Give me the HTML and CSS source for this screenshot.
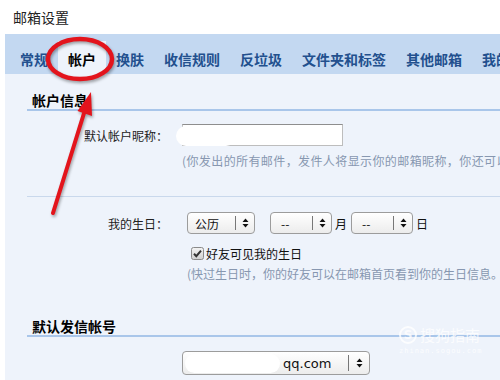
FILE: index.html
```html
<!DOCTYPE html>
<html lang="zh-CN">
<head>
<meta charset="utf-8">
<title>邮箱设置</title>
<link rel="stylesheet" href="styles.css">
</head>
<body>
<div class="page">
  <div class="title">邮箱设置</div>
  <div class="tabs">
    <span class="tab">常规</span>
    <span class="tab active">帐户</span>
    <span class="tab">换肤</span>
    <span class="tab">收信规则</span>
    <span class="tab">反垃圾</span>
    <span class="tab">文件夹和标签</span>
    <span class="tab">其他邮箱</span>
    <span class="tab">我的</span>
  </div>
  <div class="content">
    <div class="heading">帐户信息</div>
    <div class="row row-nick">
      <span class="label">默认帐户昵称：</span>
      <span class="input"><span class="blob blob-in"></span></span>
    </div>
    <div class="hint hint1">(你发出的所有邮件，发件人将显示你的邮箱昵称，你还可以</div>
    <div class="divider"></div>
    <div class="row row-birth">
      <span class="label">我的生日：</span>
      <span class="sel sel-cal"><span class="val">公历</span><span class="sep"></span><svg class="arr" width="7" height="10" viewBox="0 0 7 10"><path d="M3.5 0.5L6.5 4H0.5Z M3.5 9.5L6.5 6H0.5Z" fill="#111"/></svg></span>
      <span class="sel sel-num"><span class="val">--</span><span class="sep"></span><svg class="arr" width="7" height="10" viewBox="0 0 7 10"><path d="M3.5 0.5L6.5 4H0.5Z M3.5 9.5L6.5 6H0.5Z" fill="#111"/></svg></span>
      <span class="unit">月</span>
      <span class="sel sel-num"><span class="val">--</span><span class="sep"></span><svg class="arr" width="7" height="10" viewBox="0 0 7 10"><path d="M3.5 0.5L6.5 4H0.5Z M3.5 9.5L6.5 6H0.5Z" fill="#111"/></svg></span>
      <span class="unit">日</span>
    </div>
    <div class="check-row">
      <svg class="cb" width="13" height="13" viewBox="0 0 13 13"><defs><linearGradient id="g" x1="0" y1="0" x2="0" y2="1"><stop offset="0" stop-color="#f4f4f4"/><stop offset="1" stop-color="#cfcfcf"/></linearGradient></defs><rect x="0.5" y="0.5" width="12" height="12" rx="2" fill="url(#g)" stroke="#8a8a8a"/><path d="M3 6.8L5.3 9.2L10 3.6" fill="none" stroke="#333" stroke-width="2"/></svg>
      <span>好友可见我的生日</span>
    </div>
    <div class="hint hint2">(快过生日时，你的好友可以在邮箱首页看到你的生日信息。</div>
    <div class="heading heading2">默认发信帐号</div>
    <div class="row row-send">
      <span class="sel sel-send"><span class="blob blob-sel"></span><span class="val mail">qq.com</span><span class="sep"></span><svg class="arr" width="7" height="10" viewBox="0 0 7 10"><path d="M3.5 0.5L6.5 4H0.5Z M3.5 9.5L6.5 6H0.5Z" fill="#111"/></svg></span>
    </div>
  </div>

  <div class="watermark">
    <div class="wm-top"><span class="wm-logo">S</span><span class="wm-name">搜狗指南</span></div>
    <div class="wm-url">zhinan.sogou.com</div>
  </div>

  <svg class="annot" width="500" height="380" viewBox="0 0 500 380">
    <ellipse cx="80" cy="59" rx="32" ry="20" fill="none" stroke="#e3141c" stroke-width="4.5"/>
    <line x1="53" y1="213" x2="85" y2="110" stroke="#e3141c" stroke-width="4" stroke-linecap="round"/>
    <path d="M91 92L92 116L77.5 111Z" fill="#e3141c"/>
  </svg>
</div>
</body>
</html>
```

FILE: styles.css
```css
* { box-sizing: border-box; }
html, body { margin: 0; padding: 0; background: #fff; }
body {
  font-family: "Noto Sans CJK SC", "Microsoft YaHei", sans-serif;
  width: 500px;
  height: 380px;
  overflow: hidden;
}
.page { position: relative; width: 500px; height: 380px; overflow: hidden; }

.title {
  height: 34px;
  padding-left: 13px;
  font-size: 14px;
  line-height: 34px;
  color: #222;
}

.tabs {
  margin-left: 5px;
  height: 40px;
  background: #c3d8f1;
  display: flex;
  align-items: flex-end;
  padding-left: 5px;
  white-space: nowrap;
}
.tab {
  flex: none;
  padding: 3px 10px 0;
  height: 33px;
  line-height: 30px;
  font-size: 14px;
  font-weight: bold;
  color: #22508e;
}
.tab.active {
  background: #eef3fb;
  color: #000;
}

.content {
  margin-left: 5px;
  background: #eef3fb;
  height: 306px;
  padding-top: 17px;
}

.heading {
  margin-left: 22px;
  padding-left: 5px;
  font-size: 14px;
  font-weight: bold;
  line-height: 18px;
  color: #000;
  border-bottom: 2px solid #a9c6ea;
}

.row { display: flex; align-items: center; }
.label {
  flex: none;
  width: 163px;
  text-align: right;
  font-size: 12px;
  color: #222;
}
.row-nick { margin-top: 13px; height: 22px; }
.input {
  position: relative;
  margin-left: 14px;
  width: 161px;
  height: 22px;
  background: #fff;
  border: 1px solid #bdbdbd;
  border-top-color: #8e8e8e;
}
.blob {
  position: absolute;
  background: #fff;
  border-radius: 11px;
}
.blob-in { left: -7px; top: 1px; width: 60px; height: 20px; }

.hint {
  font-size: 12px;
  line-height: 18px;
  color: #8797b0;
  white-space: nowrap;
}
.hint1 { margin-top: 6px; margin-left: 177px; letter-spacing: 0.4px; }
.divider {
  margin: 26px 0 0 22px;
  height: 1px;
  background: #c9d8ec;
}

.row-birth { margin-top: 15px; height: 22px; }
.sel {
  flex: none;
  position: relative;
  display: flex;
  align-items: center;
  height: 22px;
  border: 1px solid #9c9c9c;
  border-radius: 4px;
  background: linear-gradient(#ffffff, #ececec);
  font-size: 12px;
  color: #111;
}
.sel .val { flex: 1; padding-left: 7px; }
.sel .sep { width: 1px; height: 14px; background: #777; }
.sel .arr { margin: 0 5px 0 6px; }
.sel-cal { margin-left: 19px; width: 68px; }
.sel-num { margin-left: 15px; width: 62px; }
.sel-num .val { padding-left: 10px; }
.unit { font-size: 12px; color: #111; margin-left: 3px; }
.unit + .sel-num { margin-left: 4px; }

.check-row {
  margin: 10px 0 0 186px;
  display: flex;
  align-items: center;
  height: 18px;
  font-size: 12px;
  color: #111;
}
.cb { margin-right: 2px; }
.hint2 { margin-top: 3px; margin-left: 182px; }

.heading2 { margin-top: 34px; }

.row-send { margin-top: 14px; }
.sel-send { margin-left: 177px; width: 188px; height: 24px; }
.blob-sel { left: 2px; top: 2px; width: 95px; height: 19px; }
.sel-send .val.mail {
  position: relative;
  padding-left: 100px;
  font-family: "DejaVu Sans", "Liberation Sans", sans-serif;
  font-size: 13px;
}
.sel-send .sep { height: 16px; }
.sel-send .arr { margin: 0 6px 0 7px; }

.watermark {
  position: absolute;
  left: 399px;
  top: 326px;
  color: rgba(255,255,255,0.8);
  pointer-events: none;
}
.wm-top { display: flex; align-items: center; }
.wm-logo {
  width: 18px; height: 18px;
  border: 2px solid rgba(255,255,255,0.8);
  border-radius: 50%;
  font-size: 12px;
  font-weight: bold;
  line-height: 14px;
  text-align: center;
  font-family: "DejaVu Sans", sans-serif;
  margin-right: 3px;
}
.wm-name { font-size: 15px; line-height: 18px; letter-spacing: 0; }
.wm-url {
  font-family: "DejaVu Sans Mono", monospace;
  font-size: 7px;
  letter-spacing: 1px;
  margin-top: 3px;
}

.annot {
  position: absolute;
  left: 0; top: 0;
  pointer-events: none;
  filter: drop-shadow(1px 2px 1.5px rgba(0,0,0,0.35));
}
```
